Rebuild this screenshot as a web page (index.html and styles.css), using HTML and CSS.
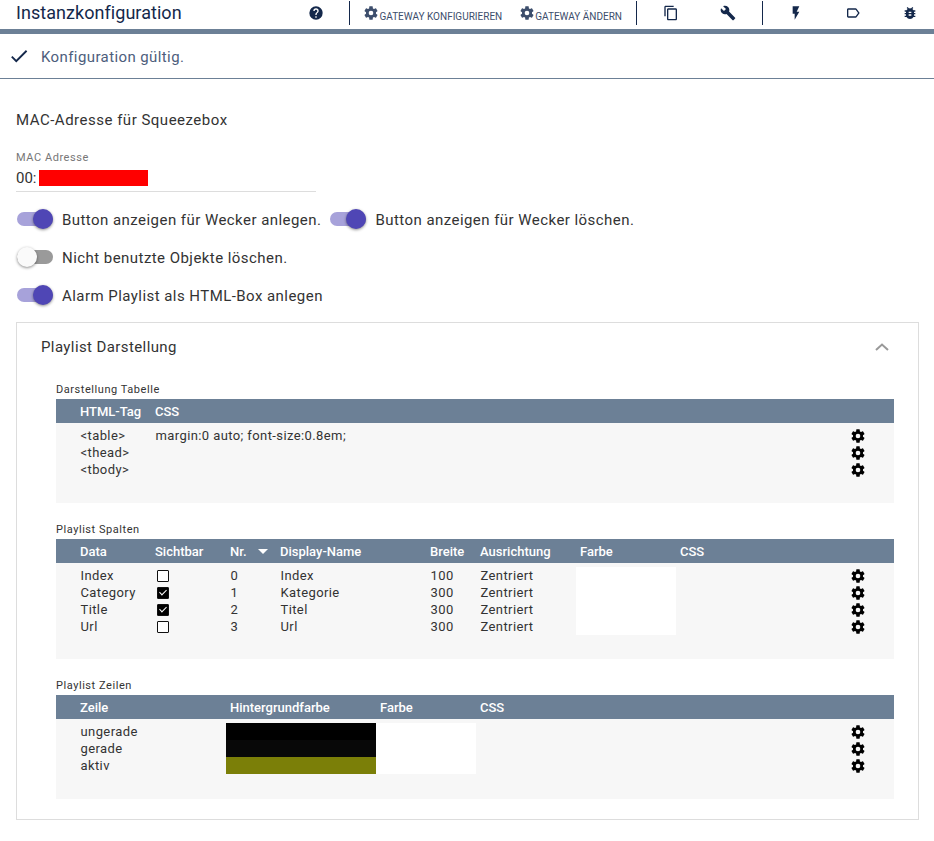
FILE: index.html
```html
<!DOCTYPE html>
<html lang="de">
<head>
    <meta charset="UTF-8">
    <meta name="viewport" content="width=device-width, initial-scale=1.0">
    <title>Instanzkonfiguration</title>
    <link rel="stylesheet" href="styles.css">
</head>
<body>
    <svg class="icon-defs" aria-hidden="true">
        <symbol id="i-cog" viewBox="0 0 24 24"><path d="M12,15.5A3.5,3.5 0 0,1 8.5,12A3.5,3.5 0 0,1 12,8.5A3.5,3.5 0 0,1 15.5,12A3.5,3.5 0 0,1 12,15.5M19.43,12.97C19.47,12.65 19.5,12.33 19.5,12C19.5,11.67 19.47,11.34 19.43,11L21.54,9.37C21.73,9.22 21.78,8.95 21.66,8.73L19.66,5.27C19.54,5.05 19.27,4.96 19.05,5.05L16.56,6.05C16.04,5.66 15.5,5.32 14.87,5.07L14.5,2.42C14.46,2.18 14.25,2 14,2H10C9.75,2 9.54,2.18 9.5,2.42L9.13,5.07C8.5,5.32 7.96,5.66 7.44,6.05L4.95,5.05C4.73,4.96 4.46,5.05 4.34,5.27L2.34,8.73C2.21,8.95 2.27,9.22 2.46,9.37L4.57,11C4.53,11.34 4.5,11.67 4.5,12C4.5,12.33 4.53,12.65 4.57,12.97L2.46,14.63C2.27,14.78 2.21,15.05 2.34,15.27L4.34,18.73C4.46,18.95 4.73,19.03 4.95,18.95L7.44,17.94C7.96,18.34 8.5,18.68 9.13,18.93L9.5,21.58C9.54,21.82 9.75,22 10,22H14C14.25,22 14.46,21.82 14.5,21.58L14.87,18.93C15.5,18.67 16.04,18.34 16.56,17.94L19.05,18.95C19.27,19.03 19.54,18.95 19.66,18.73L21.66,15.27C21.78,15.05 21.73,14.78 21.54,14.63L19.43,12.97Z"/></symbol>
        <symbol id="i-help" viewBox="0 0 24 24"><path d="M15.07,11.25L14.17,12.17C13.45,12.89 13,13.5 13,15H11V14.5C11,13.39 11.45,12.39 12.17,11.67L13.41,10.41C13.78,10.05 14,9.55 14,9C14,7.89 13.1,7 12,7A2,2 0 0,0 10,9H8A4,4 0 0,1 12,5A4,4 0 0,1 16,9C16,9.88 15.64,10.67 15.07,11.25M13,19H11V17H13M12,2A10,10 0 0,0 2,12A10,10 0 0,0 12,22A10,10 0 0,0 22,12C22,6.47 17.5,2 12,2Z"/></symbol>
        <symbol id="i-copy" viewBox="0 0 24 24"><path d="M16 1H4c-1.1 0-2 .9-2 2v14h2V3h12V1zm3 4H8c-1.1 0-2 .9-2 2v14c0 1.1.9 2 2 2h11c1.1 0 2-.9 2-2V7c0-1.1-.9-2-2-2zm0 16H8V7h11v14z"/></symbol>
        <symbol id="i-wrench" viewBox="0 0 24 24"><path d="M22.7 19l-9.1-9.1c.9-2.3.4-5-1.5-6.9-2-2-5-2.4-7.4-1.3L9 6 6 9 1.6 4.7C.4 7.1.9 10.1 2.9 12.1c1.9 1.9 4.6 2.4 6.9 1.5l9.1 9.1c.4.4 1 .4 1.4 0l2.3-2.3c.5-.4.5-1.1.1-1.4z"/></symbol>
        <symbol id="i-flash" viewBox="0 0 24 24"><path d="M7 2v11h3v9l7-12h-4l4-8z"/></symbol>
        <symbol id="i-label" viewBox="0 0 24 24"><path d="M17.63 5.84C17.27 5.33 16.67 5 16 5L5 5.01C3.9 5.01 3 5.9 3 7v10c0 1.1.9 1.99 2 1.99L16 19c.67 0 1.27-.33 1.63-.84L22 12l-4.37-6.16zM16 17H5V7h11l3.55 5L16 17z"/></symbol>
        <symbol id="i-bug" viewBox="0 0 24 24"><path d="M20 8h-2.81c-.45-.78-1.07-1.45-1.82-1.96L17 4.41 15.59 3l-2.17 2.17C12.96 5.06 12.49 5 12 5c-.49 0-.96.06-1.41.17L8.41 3 7 4.41l1.62 1.63C7.88 6.55 7.26 7.22 6.81 8H4v2h2.09c-.05.33-.09.66-.09 1v1H4v2h2v1c0 .34.04.67.09 1H4v2h2.81c1.04 1.79 2.97 3 5.19 3s4.15-1.21 5.19-3H20v-2h-2.09c.05-.33.09-.66.09-1v-1h2v-2h-2v-1c0-.34-.04-.67-.09-1H20V8zm-6 8h-4v-2h4v2zm0-4h-4v-2h4v2z"/></symbol>
    </svg>

    <header class="topbar">
        <h1 class="topbar-title">Instanzkonfiguration</h1>
        <button class="icon-btn"><svg class="icon"><use href="#i-help"/></svg></button>
        <span class="divider divider-help"></span>
        <button class="text-btn text-btn-first"><svg class="icon"><use href="#i-cog"/></svg>Gateway konfigurieren</button>
        <button class="text-btn"><svg class="icon"><use href="#i-cog"/></svg>Gateway ändern</button>
        <span class="divider divider-mid"></span>
        <button class="icon-btn"><svg class="icon"><use href="#i-copy"/></svg></button>
        <button class="icon-btn"><svg class="icon"><use href="#i-wrench"/></svg></button>
        <span class="divider divider-last"></span>
        <button class="icon-btn"><svg class="icon"><use href="#i-flash"/></svg></button>
        <button class="icon-btn"><svg class="icon"><use href="#i-label"/></svg></button>
        <button class="icon-btn icon-btn-last"><svg class="icon"><use href="#i-bug"/></svg></button>
    </header>

    <div class="status">
        <svg class="status-check" viewBox="0 0 24 24"><path d="M9 16.17L4.83 12l-1.42 1.41L9 19 21 7l-1.41-1.41z"/></svg>
        <span class="status-text">Konfiguration gültig.</span>
    </div>

    <main class="content">
        <h2 class="section-title">MAC-Adresse für Squeezebox</h2>
        <div class="field">
            <label class="field-label">MAC Adresse</label>
            <div class="field-value">00:<span class="redacted"></span></div>
        </div>

        <div class="switch-row">
            <span class="switch on"></span>
            <span class="switch-text">Button anzeigen für Wecker anlegen.</span>
            <span class="switch on"></span>
            <span class="switch-text">Button anzeigen für Wecker löschen.</span>
        </div>
        <div class="switch-row">
            <span class="switch"></span>
            <span class="switch-text">Nicht benutzte Objekte löschen.</span>
        </div>
        <div class="switch-row">
            <span class="switch on"></span>
            <span class="switch-text">Alarm Playlist als HTML-Box anlegen</span>
        </div>

        <section class="panel">
            <div class="panel-head">
                <span>Playlist Darstellung</span>
                <svg class="chevron" viewBox="0 0 14 8"><polyline points="1,7 7,1.5 13,7"/></svg>
            </div>

            <h3 class="table-title">Darstellung Tabelle</h3>
            <div class="table-wrap">
                <table>
                    <colgroup>
                        <col class="w20"><col class="w75"><col><col class="w72">
                    </colgroup>
                    <thead>
                        <tr><th></th><th>HTML-Tag</th><th>CSS</th><th></th></tr>
                    </thead>
                    <tbody>
                        <tr><td></td><td>&lt;table&gt;</td><td>margin:0 auto; font-size:0.8em;</td><td class="action"><svg class="gear"><use href="#i-cog"/></svg></td></tr>
                        <tr><td></td><td>&lt;thead&gt;</td><td></td><td class="action"><svg class="gear"><use href="#i-cog"/></svg></td></tr>
                        <tr><td></td><td>&lt;tbody&gt;</td><td></td><td class="action"><svg class="gear"><use href="#i-cog"/></svg></td></tr>
                    </tbody>
                </table>
            </div>

            <h3 class="table-title">Playlist Spalten</h3>
            <div class="table-wrap table-wrap-long">
                <table>
                    <colgroup>
                        <col class="w20"><col class="w75"><col class="w75"><col class="w50"><col class="w150"><col class="w50"><col class="w100"><col class="w100"><col><col class="w72">
                    </colgroup>
                    <thead>
                        <tr><th></th><th>Data</th><th>Sichtbar</th><th>Nr.<span class="sort-arrow"></span></th><th>Display-Name</th><th>Breite</th><th>Ausrichtung</th><th>Farbe</th><th>CSS</th><th></th></tr>
                    </thead>
                    <tbody>
                        <tr><td></td><td>Index</td><td><span class="check"></span></td><td>0</td><td>Index</td><td>100</td><td>Zentriert</td><td class="c-white"></td><td></td><td class="action"><svg class="gear"><use href="#i-cog"/></svg></td></tr>
                        <tr><td></td><td>Category</td><td><span class="check on"></span></td><td>1</td><td>Kategorie</td><td>300</td><td>Zentriert</td><td class="c-white"></td><td></td><td class="action"><svg class="gear"><use href="#i-cog"/></svg></td></tr>
                        <tr><td></td><td>Title</td><td><span class="check on"></span></td><td>2</td><td>Titel</td><td>300</td><td>Zentriert</td><td class="c-white"></td><td></td><td class="action"><svg class="gear"><use href="#i-cog"/></svg></td></tr>
                        <tr><td></td><td>Url</td><td><span class="check"></span></td><td>3</td><td>Url</td><td>300</td><td>Zentriert</td><td class="c-white"></td><td></td><td class="action"><svg class="gear"><use href="#i-cog"/></svg></td></tr>
                    </tbody>
                </table>
            </div>

            <h3 class="table-title">Playlist Zeilen</h3>
            <div class="table-wrap">
                <table>
                    <colgroup>
                        <col class="w20"><col class="w150"><col class="w150"><col class="w100"><col><col class="w72">
                    </colgroup>
                    <thead>
                        <tr><th></th><th>Zeile</th><th>Hintergrundfarbe</th><th>Farbe</th><th>CSS</th><th></th></tr>
                    </thead>
                    <tbody>
                        <tr><td></td><td>ungerade</td><td class="c-black"></td><td class="c-white"></td><td></td><td class="action"><svg class="gear"><use href="#i-cog"/></svg></td></tr>
                        <tr><td></td><td>gerade</td><td class="c-dark"></td><td class="c-white"></td><td></td><td class="action"><svg class="gear"><use href="#i-cog"/></svg></td></tr>
                        <tr><td></td><td>aktiv</td><td class="c-olive"></td><td class="c-white"></td><td></td><td class="action"><svg class="gear"><use href="#i-cog"/></svg></td></tr>
                    </tbody>
                </table>
            </div>
        </section>
    </main>
</body>
</html>
```

FILE: styles.css
```css
html, body {
    margin: 0;
    padding: 0;
}
body {
    font-family: "Roboto", "Liberation Sans", sans-serif;
    background-color: #fff;
    color: #333;
    overflow-x: hidden;
}
.icon-defs {
    display: none;
}

/* top bar */
.topbar {
    display: flex;
    align-items: center;
    box-sizing: border-box;
    height: 34px;
    padding: 0 0 3px 16px;
    border-bottom: 5px solid #6c8096;
    color: #14284b;
}
.topbar-title {
    flex: 1;
    margin: 0;
    padding-bottom: 2px;
    font-size: 18px;
    font-weight: 400;
    letter-spacing: 0.05px;
}
.icon {
    width: 16px;
    height: 16px;
    fill: currentColor;
    flex: none;
}
.icon-btn, .text-btn {
    display: flex;
    align-items: center;
    justify-content: center;
    height: 26px;
    margin: 0;
    padding: 0;
    border: none;
    background: none;
    color: inherit;
    font-family: inherit;
}
.icon-btn {
    width: 57px;
    flex: none;
}
.icon-btn-last {
    width: 48px;
    margin-left: 5px;
}
.text-btn {
    padding-top: 6px;
    padding-left: 17px;
    font-size: 10px;
    text-transform: uppercase;
    color: #3d4e6c;
    white-space: nowrap;
}
.text-btn .icon {
    margin-bottom: 6px;
}
.text-btn-first {
    padding-left: 13px;
}
.divider {
    width: 1px;
    height: 24px;
    margin: 0 4px;
    background-color: #14284b;
    flex: none;
}
.divider-help {
    margin-left: 5px;
    margin-right: 0;
}
.divider-mid {
    margin: 0 5px 0 14px;
}
.divider-last {
    margin-left: 6px;
}

/* status line */
.status {
    display: flex;
    align-items: center;
    height: 44px;
    padding-left: 8px;
    border-bottom: 1px solid #6c8096;
    font-size: 15px;
    letter-spacing: 0.4px;
    color: #4d5e7c;
}
.status-text {
    padding-top: 2px;
}
.status-check {
    width: 22px;
    height: 22px;
    margin-right: 11px;
    fill: #14284b;
}

.content {
    padding: 31px 15px 20px 16px;
}
.section-title {
    margin: 0 0 21px;
    font-size: 15px;
    line-height: 20px;
    font-weight: 400;
    letter-spacing: 0.5px;
}

/* mac field */
.field {
    width: 300px;
    margin-bottom: 8px;
    border-bottom: 1px solid #ddd;
}
.field-label {
    display: block;
    font-size: 11px;
    line-height: 14px;
    color: #777;
    letter-spacing: 0.55px;
}
.field-value {
    display: flex;
    align-items: center;
    height: 23px;
    margin-top: 3px;
    padding-bottom: 3px;
    box-sizing: border-box;
    font-size: 15px;
}
.redacted {
    width: 109px;
    height: 16px;
    margin-left: 2px;
    background-color: #f00;
}

/* switches */
.switch-row {
    display: flex;
    align-items: center;
    height: 38px;
}
.switch {
    position: relative;
    width: 36px;
    height: 14px;
    margin-left: 1px;
    border-radius: 7px;
    background-color: #9a9a9a;
    flex: none;
}
.switch::after {
    content: "";
    position: absolute;
    top: -3px;
    left: 0;
    width: 20px;
    height: 20px;
    border-radius: 50%;
    background-color: #fafafa;
    box-shadow: 0 1px 3px rgba(0, 0, 0, 0.45);
}
.switch.on {
    background-color: #a7a2da;
}
.switch.on::after {
    left: 16px;
    background-color: #4f46b5;
}
.switch-text {
    margin: 0 8px 0 9px;
    padding-top: 1px;
    font-size: 15px;
    letter-spacing: 0.45px;
}

/* panel */
.panel {
    margin-top: 8px;
    padding: 0 24px 20px;
    border: 1px solid #ddd;
}
.panel-head {
    display: flex;
    align-items: center;
    justify-content: space-between;
    height: 47px;
    padding-right: 5px;
    font-size: 15px;
    letter-spacing: 0.4px;
}
.chevron {
    width: 14px;
    height: 8px;
    fill: none;
    stroke: #999;
    stroke-width: 2;
}
.table-title {
    margin: 13px 15px 2px;
    font-size: 11px;
    line-height: 14px;
    font-weight: 400;
    letter-spacing: 0.55px;
}
.table-wrap + .table-title {
    margin-top: 20px;
}
.table-wrap {
    margin-left: 15px;
    padding-bottom: 25px;
    background-color: #f7f7f7;
}
.table-wrap-long {
    padding-bottom: 24px;
}
table {
    width: 100%;
    border-collapse: collapse;
    table-layout: fixed;
    font-size: 13px;
    letter-spacing: 0.4px;
}
.w20 { width: 20px; }
.w50 { width: 50px; }
.w72 { width: 72px; }
.w75 { width: 75px; }
.w100 { width: 100px; }
.w150 { width: 150px; }
thead th {
    height: 24px;
    padding: 0 4px;
    background-color: #6c8096;
    color: #fff;
    font-weight: 500;
    letter-spacing: 0;
    text-align: left;
    white-space: nowrap;
}
tbody::before {
    content: "";
    display: block;
    height: 4px;
}
tbody td {
    height: 17px;
    padding: 0 4px 0 4.5px;
    line-height: 17px;
    white-space: nowrap;
}
td.action {
    padding: 0;
    text-align: center;
}
.gear {
    display: block;
    width: 16px;
    height: 16px;
    margin: 0 auto;
    fill: #000;
}
.sort-arrow {
    display: inline-block;
    margin-left: 11px;
    vertical-align: 2px;
    border-left: 5px solid transparent;
    border-right: 5px solid transparent;
    border-top: 5px solid #fff;
}
.check {
    position: relative;
    display: block;
    width: 12px;
    height: 12px;
    margin-left: 1px;
    box-sizing: border-box;
    border: 1.5px solid #111;
    border-radius: 1px;
    background-color: #fff;
}
.check.on {
    background-color: #000;
}
.check.on::after {
    content: "";
    position: absolute;
    top: 0;
    left: 3px;
    width: 3px;
    height: 6px;
    border: solid #fff;
    border-width: 0 1.5px 1.5px 0;
    transform: rotate(45deg);
}
.c-white { background-color: #fff; }
.c-black { background-color: #000; }
.c-dark { background-color: #080808; }
.c-olive { background-color: #7b7f08; }
```
